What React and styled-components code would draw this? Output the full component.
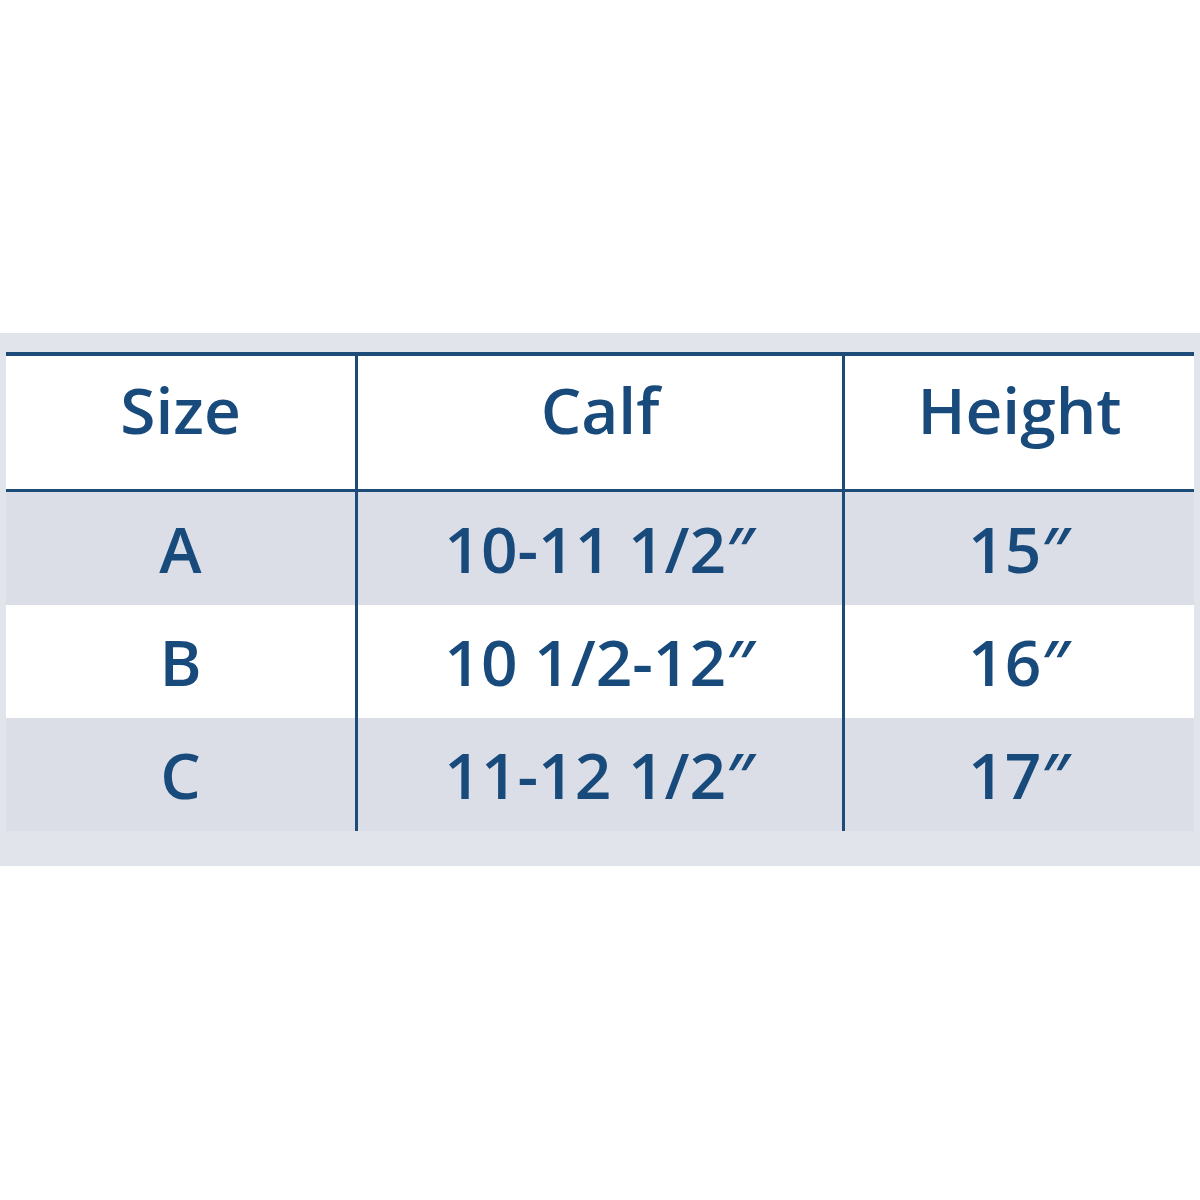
import { createGlobalStyle, styled } from 'styled-components'

const GlobalStyle = createGlobalStyle`
  body {
    margin: 0;
    background: #ffffff;
    font-family: 'Open Sans', 'Liberation Sans', sans-serif;
  }
`

const rows = [
  { size: 'A', calf: '10-11 1/2″', height: '15″', shade: true },
  { size: 'B', calf: '10 1/2-12″', height: '16″', shade: false },
  { size: 'C', calf: '11-12 1/2″', height: '17″', shade: true },
]

export default function App() {
  return (
    <>
      <GlobalStyle />
      <Page>
        <Band>
          <Table>
            <HeadCell>Size</HeadCell>
            <HeadCell divider>Calf</HeadCell>
            <HeadCell divider>Height</HeadCell>
            {rows.map((row) => (
              <Row key={row.size}>
                <Cell shade={row.shade ? 1 : 0}>{row.size}</Cell>
                <Cell shade={row.shade ? 1 : 0} divider>
                  {row.calf}
                </Cell>
                <Cell shade={row.shade ? 1 : 0} divider>
                  {row.height}
                </Cell>
              </Row>
            ))}
          </Table>
        </Band>
      </Page>
    </>
  )
}

const Page = styled.div`
  padding-top: 333px;
  height: 1200px;
  box-sizing: border-box;
`

const Band = styled.div`
  background: #e1e4eb;
  padding: 19px 6px 35px;
`

const Table = styled.div`
  display: grid;
  grid-template-columns: 349px 487px 352px;
  border-top: 4px solid #1c4b78;
`

const Row = styled.div`
  display: contents;
`

const HeadCell = styled.div`
  display: flex;
  justify-content: center;
  align-items: flex-start;
  box-sizing: border-box;
  height: 136px;
  padding-top: 22px;
  background: #ffffff;
  border-bottom: 3px solid #1c4b78;
  border-left: ${(props) => (props.divider ? '3px solid #1c4b78' : 'none')};

  font-size: 64px;
  line-height: 64px;
  font-weight: 600;
  color: #184a7c;
`

const Cell = styled.div`
  display: flex;
  justify-content: center;
  align-items: center;
  box-sizing: border-box;
  height: 113px;
  background: ${(props) => (props.shade ? '#dbdee6' : '#ffffff')};
  border-left: ${(props) => (props.divider ? '3px solid #1c4b78' : 'none')};

  font-size: 64px;
  line-height: 64px;
  font-weight: 600;
  color: #184a7c;
`
